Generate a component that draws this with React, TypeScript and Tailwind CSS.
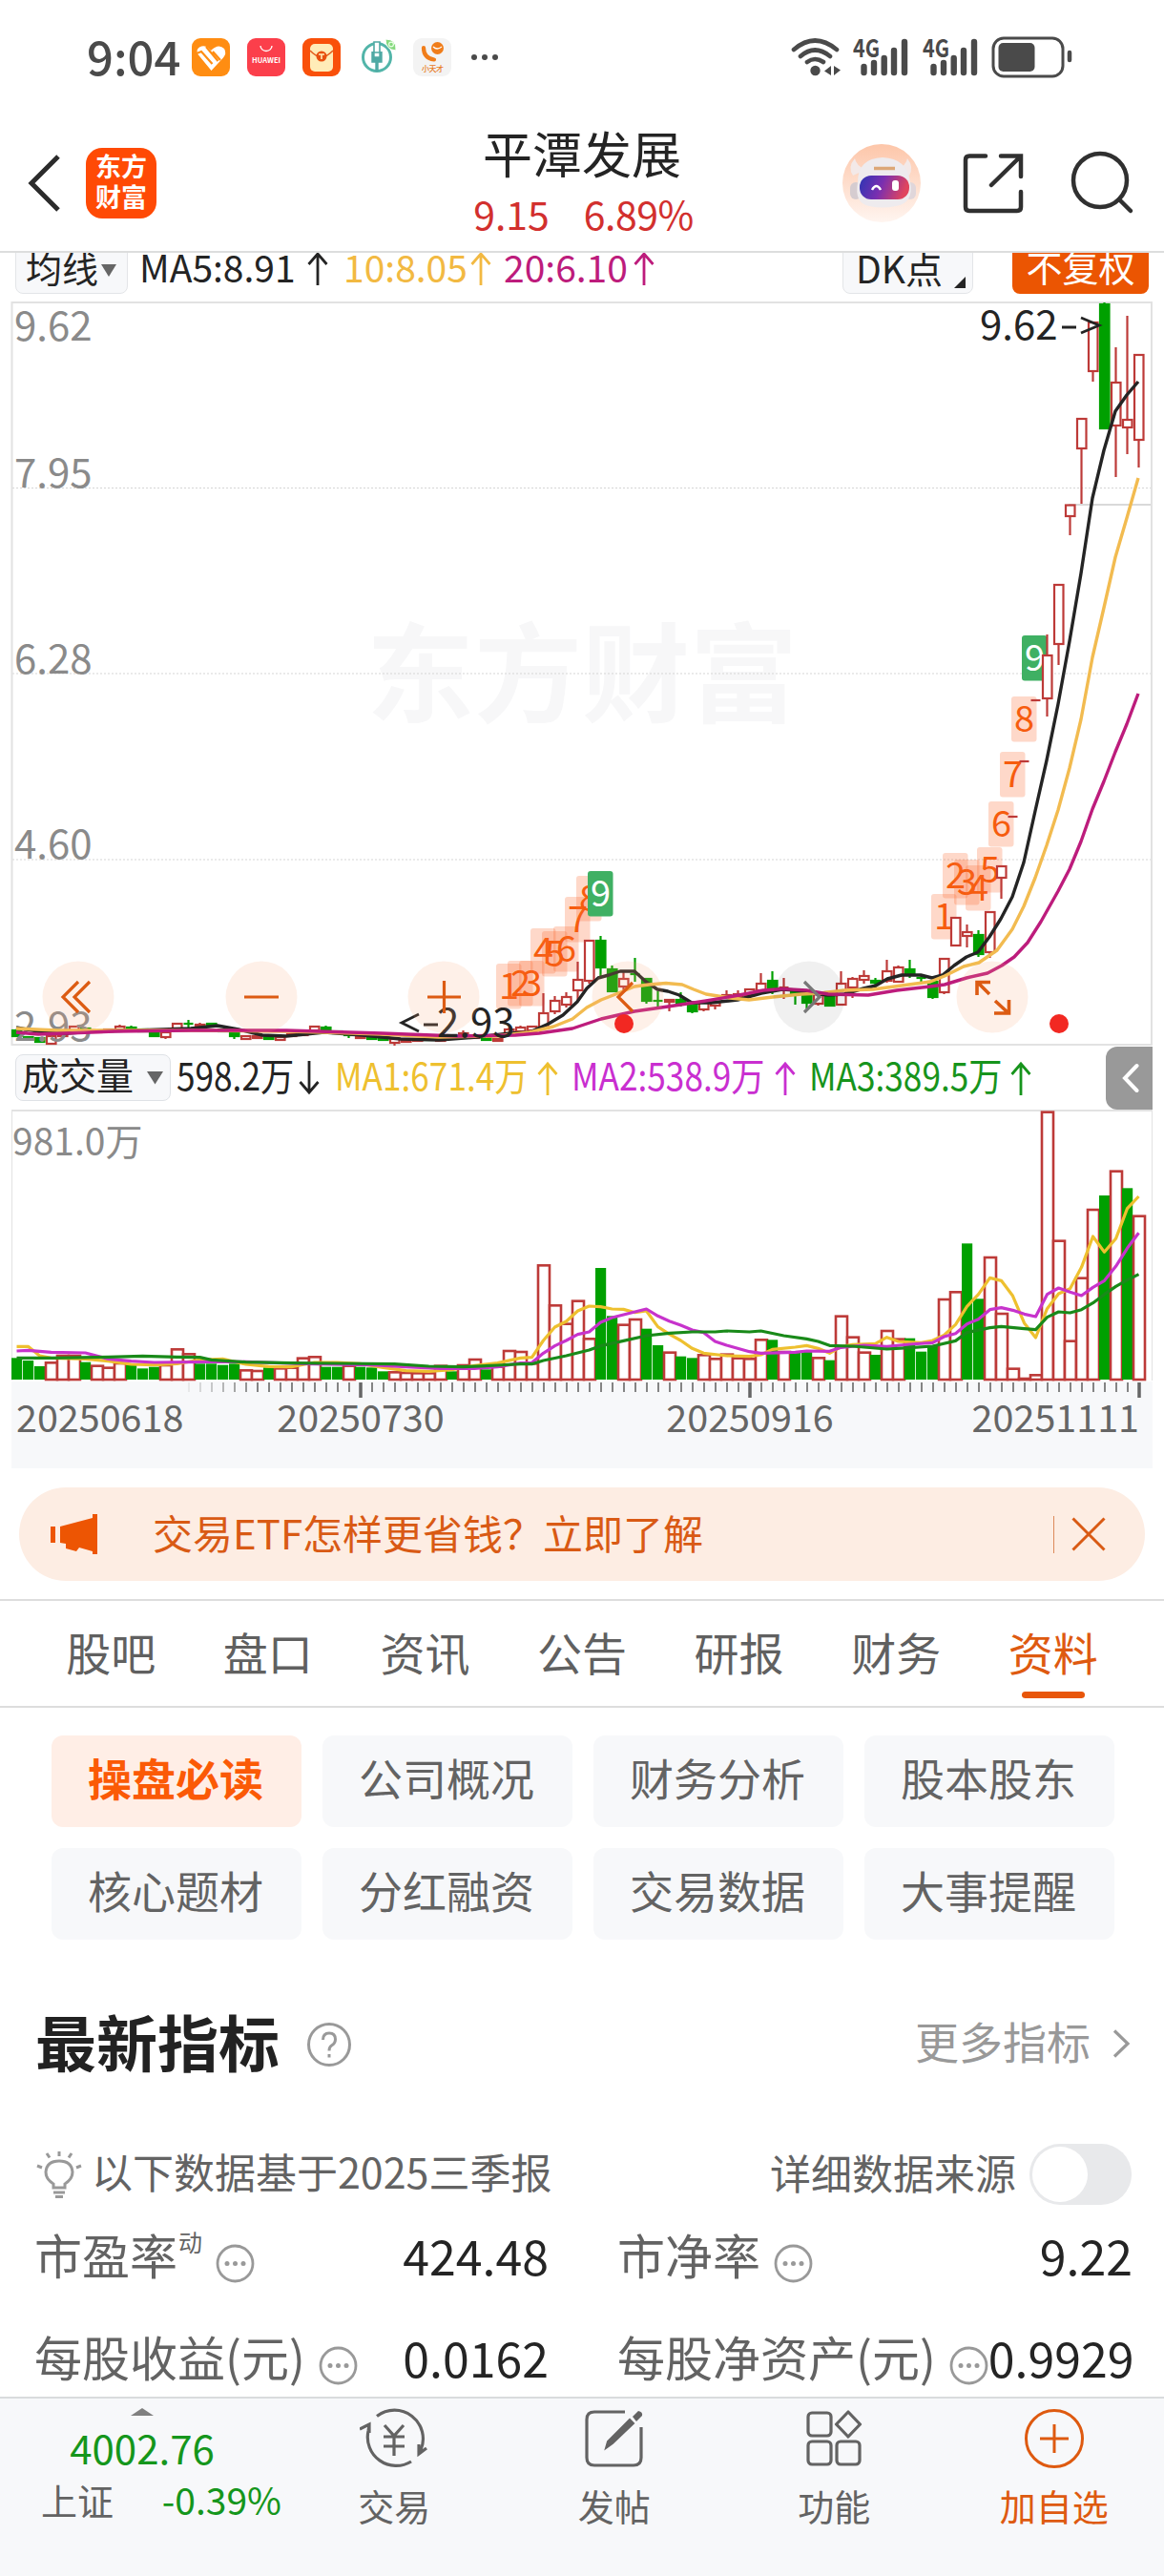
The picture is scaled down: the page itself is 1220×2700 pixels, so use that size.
import React, { useState } from 'react';
import clsx from 'clsx';

type Candle = [index: number, up: 0 | 1, top: number, bottom: number, high?: number, low?: number];
type Point = [number, number];

const BAR_STEP = 12;
const FIRST_BAR = 17.5;
const RED = '#bd3a38';
const GREEN = '#00a000';

const barX = (i: number) => FIRST_BAR + i * BAR_STEP;

// [bar, rising, body top, body bottom, wick top, wick bottom]
const candles: Candle[] = [
  [0, 0, 1080, 1086], [1, 0, 1087, 1089], [2, 0, 1088, 1092], [3, 1, 1086, 1094], [4, 1, 1084, 1086],
  [5, 1, 1076, 1080], [6, 0, 1078, 1080], [7, 1, 1080, 1082], [8, 1, 1079, 1081], [9, 1, 1076, 1079, 1074],
  [10, 0, 1077, 1079, 1075], [11, 0, 1079, 1081], [12, 0, 1082, 1086], [13, 1, 1082, 1087, 1080, 1089], [14, 1, 1073, 1078],
  [15, 0, 1073, 1073, 1069, 1077], [16, 1, 1074, 1076, 1072], [17, 0, 1073, 1075], [18, 0, 1079, 1081], [19, 0, 1083, 1086, 1081, 1089],
  [20, 1, 1086, 1089], [21, 1, 1086, 1088], [22, 0, 1087, 1089, 1084, 1090], [23, 1, 1087, 1090], [24, 1, 1084, 1086],
  [25, 1, 1083, 1085], [26, 1, 1076, 1080], [27, 0, 1077, 1080, 1075], [28, 0, 1081, 1083], [29, 0, 1083, 1085, 1081, 1088],
  [30, 1, 1086, 1088], [31, 0, 1086, 1089, 1084, 1090], [32, 0, 1088, 1090], [33, 1, 1089, 1093, 1087, 1096], [34, 1, 1090, 1092],
  [35, 1, 1089, 1091], [36, 0, 1088, 1090], [37, 1, 1089, 1091], [38, 0, 1086, 1088], [39, 1, 1083, 1085, 1080, 1088],
  [40, 1, 1086, 1088], [41, 0, 1088, 1090, 1086, 1091], [42, 1, 1089, 1091], [43, 1, 1079, 1083, 1077], [44, 1, 1077, 1081, 1075],
  [45, 1, 1076, 1080], [46, 1, 1062, 1078, 1041], [47, 1, 1049, 1060, 1044, 1063], [48, 1, 1045, 1053, 1040, 1056], [49, 1, 1027, 1038, 1008, 1050],
  [50, 1, 986, 1028, 986, 1031], [51, 0, 986, 1014, 981, 1023], [52, 0, 1016, 1039, 1012, 1040], [53, 1, 1026, 1034, 1019, 1038], [54, 0, 1021, 1021, 1004, 1029],
  [55, 0, 1026, 1049, 1025, 1052], [56, 0, 1049, 1049, 1039, 1055], [57, 1, 1048, 1050, 1048, 1060], [58, 0, 1048, 1051, 1040, 1055], [59, 0, 1053, 1060, 1052, 1062],
  [60, 1, 1051, 1058, 1051, 1060], [61, 1, 1051, 1054, 1050, 1058], [62, 1, 1043, 1046, 1038], [63, 1, 1042, 1045, 1038], [64, 1, 1037, 1043],
  [65, 1, 1031, 1038, 1020], [66, 0, 1028, 1037, 1018, 1042], [67, 1, 1035, 1035, 1025, 1047], [68, 0, 1039, 1042, 1039, 1053], [69, 0, 1042, 1051, 1040, 1057],
  [70, 1, 1042, 1052, 1040, 1054], [71, 0, 1040, 1054], [72, 1, 1031, 1053, 1018], [73, 1, 1026, 1035, 1024, 1046], [74, 1, 1023, 1027, 1017, 1031],
  [75, 0, 1028, 1030, 1025, 1037], [76, 1, 1018, 1028, 1006, 1030], [77, 1, 1014, 1029, 1012], [78, 0, 1016, 1021, 1006, 1025], [79, 0, 1025, 1025, 1022, 1030],
  [80, 0, 1029, 1045, 1027, 1047], [81, 1, 1005, 1040, 1005, 1042], [82, 1, 962, 991], [83, 1, 977, 981, 969, 993], [84, 0, 980, 1000, 975, 1003],
  [85, 1, 956, 998, 956, 1004], [86, 1, 908, 920, 908, 942], [87, 1, 856, 856], [88, 1, 798, 798], [89, 1, 734, 734],
  [90, 1, 687, 732, 665, 751], [91, 1, 613, 675, 613, 697], [92, 1, 529.5, 541, 529.5, 561], [93, 1, 439, 470, 439, 528], [94, 1, 338, 389, 338, 400],
  [95, 0, 319, 449, 317, 449], [96, 1, 401, 446, 364, 500], [97, 1, 440, 448, 331, 476], [98, 1, 372, 461, 372, 490],
];

// Bar heights measured up from the volume baseline, negative when the day closed lower
const volumes = [
  -68, -60, -42, 56, 78, 78, -55, 46, 40, 54, -45, -35, -40, 48, 98, 83, -50, -50, -46, -50,
  32, 30, -38, 38, 40, 70, 74, -40, -40, 46, -40, -38, -26, 26, 24, 23, 23, 46, -26, 48,
  66, -32, 43, 93, 90, 53, 362, 236, 178, 250, 131, -351, -200, 175, 192, -160, -108, 88, -73, -68,
  80, 68, 82, 70, 68, 128, -125, 90, -88, -93, 71, -61, 202, 136, 88, -78, 156, 130, -130, -88,
  -105, 255, 278, -428, -254, 387, 210, 37, 6, 17, 844, 439, 124, 322, 537, -579, 658, -602, 517,
].map((v) => v / 3);

const priceMa: { color: string; points: Point[] }[] = [
  {
    color: '#242424',
    points: [
      [17, 1077], [40, 1081], [70, 1083], [100, 1081], [140, 1080], [200, 1078], [228, 1075], [250, 1079], [275, 1085], [300, 1086],
      [340, 1082], [380, 1085], [420, 1089], [460, 1090], [500, 1087], [535, 1083], [555, 1082], [575, 1073], [590, 1064], [605, 1050],
      [615, 1036], [627, 1025], [638, 1022], [650, 1018], [665, 1018], [677, 1029], [689, 1037], [700, 1039], [712, 1043], [725, 1051],
      [745, 1051], [773, 1048], [798, 1041], [820, 1037], [835, 1038], [850, 1041], [868, 1043], [885, 1042], [905, 1036], [918, 1033],
      [930, 1026], [945, 1022], [965, 1022], [977, 1025], [988, 1022], [1000, 1012], [1013, 1003], [1025, 998], [1037, 982], [1049, 963], [1061, 940],
      [1073, 904], [1085, 850], [1097, 797], [1109, 738], [1121, 672], [1133, 601], [1145, 522], [1157, 472], [1169, 431], [1181, 414], [1193, 400],
    ],
  },
  {
    color: '#f2bb50',
    points: [
      [17, 1078], [60, 1080], [100, 1080], [200, 1080], [300, 1081], [340, 1082], [400, 1084], [460, 1087], [520, 1086], [555, 1082],
      [580, 1076], [600, 1068], [615, 1056], [630, 1048], [648, 1041], [665, 1034], [680, 1032], [698, 1030.5], [715, 1032], [727, 1037],
      [740, 1042], [765, 1046], [785, 1048], [810, 1045], [840, 1042], [860, 1041], [885, 1038], [915, 1037], [945, 1033], [975, 1029],
      [990, 1023], [1010, 1013], [1026, 1009], [1045, 996], [1061, 974], [1073, 950], [1085, 920], [1097, 886], [1109, 849], [1121, 805],
      [1133, 754], [1145, 689], [1157, 637], [1169, 584], [1181, 543], [1193, 501],
    ],
  },
  {
    color: '#bd1c7c',
    points: [
      [17, 1082], [40, 1084], [70, 1083], [120, 1081], [200, 1080], [300, 1080], [400, 1083], [480, 1086], [540, 1085], [565, 1083],
      [600, 1078], [630, 1068], [665, 1060], [700, 1055], [740, 1049], [775, 1043], [800, 1038], [820, 1036.5], [845, 1038], [868, 1042],
      [910, 1043], [940, 1038], [975, 1034], [990, 1032], [1013, 1025], [1035, 1020], [1050, 1012], [1063, 1003], [1077, 988], [1091, 966],
      [1109, 934], [1121, 911], [1133, 882], [1145, 848], [1157, 819], [1169, 788], [1181, 759], [1193, 727],
    ],
  },
];

const volumeMa: { color: string; points: Point[] }[] = [
  {
    color: '#eec02f',
    points: [
      [0, 964], [1, 964], [2, 993], [3, 1000], [6, 1003], [8, 1010], [10, 1020], [12, 1022], [14, 1018], [16, 1006], [18, 1003],
      [20, 1020], [22, 1027], [24, 1028], [26, 1014], [28, 1014], [30, 1018], [32, 1030], [34, 1040], [36, 1042], [38, 1037],
      [40, 1024], [42, 1016], [44, 1000], [45, 998], [46, 945], [47, 903], [48, 885], [49, 852], [50, 837], [51, 839], [52, 846],
      [53, 847], [54, 857], [55, 852], [56, 902], [57, 925], [58, 945], [59, 970], [60, 985], [62, 993], [64, 995], [65, 990],
      [66, 973], [68, 966], [69, 961], [70, 970], [71, 985], [72, 965], [73, 958], [75, 955], [76, 935], [77, 948], [79, 952],
      [80, 945], [81, 928], [82, 895], [83, 838], [84, 800], [85, 748], [86, 757], [87, 805], [88, 890], [89, 936], [90, 845],
      [91, 798], [92, 782], [93, 715], [94, 618], [95, 667], [96, 625], [97, 530], [98, 492],
    ],
  },
  {
    color: '#c733cc',
    points: [
      [0, 978], [1, 976], [3, 982], [6, 984], [8, 1003], [10, 1010], [12, 1014], [17, 1012], [20, 1012], [25, 1018], [31, 1022],
      [34, 1028], [37, 1033], [40, 1033], [42, 1028], [44, 1016], [45, 1015], [46, 985], [47, 962], [48, 945], [49, 926], [50, 918],
      [51, 888], [52, 873], [54, 855], [55, 846], [56, 868], [57, 884], [58, 897], [59, 912], [60, 920], [61, 948], [62, 960],
      [64, 980], [65, 985], [68, 982], [69, 978], [71, 979], [72, 967], [74, 960], [76, 964], [78, 957], [80, 952], [81, 933],
      [82, 923], [83, 893], [84, 878], [85, 848], [86, 842], [87, 850], [88, 862], [89, 870], [90, 800], [91, 780], [92, 793],
      [93, 804], [94, 778], [95, 757], [96, 712], [97, 655], [98, 607],
    ],
  },
  {
    color: '#198a19',
    points: [
      [0, 1000], [3, 1000], [8, 997], [11, 994], [14, 997], [16, 998], [17, 1006], [20, 1013], [24, 1016], [28, 1017], [33, 1019],
      [36, 1026], [39, 1028], [42, 1023], [44, 1019], [45, 1019], [46, 1008], [48, 993], [50, 975], [51, 962], [53, 946], [55, 930],
      [57, 922], [59, 918], [61, 918], [62, 915], [64, 918], [65, 915], [67, 930], [69, 940], [70, 948], [71, 961], [73, 963],
      [76, 972], [78, 968], [80, 963], [82, 946], [83, 920], [85, 905], [86, 901], [88, 908], [89, 911], [90, 872], [91, 855],
      [92, 858], [93, 848], [94, 827], [95, 800], [96, 775], [97, 755], [98, 737],
    ],
  },
];

// Nine-turn sequence labels, [text, left, top]
const marks: [string, number, number][] = [
  ['1', 520, 1010], ['2', 532, 1007], ['3', 544, 1007], ['4', 556, 973], ['5', 568, 976], ['6', 580, 971], ['7', 592, 940], ['8', 604, 918], ['9', 616, 913],
  ['1', 976, 937], ['2', 988, 894], ['3', 1000, 901], ['4', 1012, 907], ['5', 1024, 888], ['6', 1036, 840], ['7', 1048, 788], ['8', 1060, 730], ['9', 1071, 666],
];

const toPoints = (points: Point[]) => points.map((p) => p.join(',')).join(' ');

const Arrow: React.FC<{ down?: boolean; className?: string }> = ({ down, className }) => (
  <svg width="22" height="36" viewBox="0 0 22 36" fill="none" stroke="currentColor" strokeWidth="2.800" className={clsx(down && 'rotate-180', className)}>
    <path d="M11 36V3M1.500 14L11 3L20.500 14" />
  </svg>
);

const Signal = () => (
  <svg width="58" height="42" viewBox="0 0 58 42" className="text-[#4a4a4a]">
    <text x="0" y="21" fontSize="26" fontWeight="700" fill="currentColor" textLength="28" lengthAdjust="spacingAndGlyphs">4G</text>
    <path d="M11.5 31v6M22 27v10M32.700 22v15M43 14v23M54 5v32" stroke="currentColor" strokeWidth="6.400" strokeLinecap="round" />
  </svg>
);

const StatusBar = () => (
  <div className="flex h-[120px] items-center pl-[91px] text-[#4a4a4a]">
    <span className="-mt-[6px] w-[110px] text-[49px] leading-none font-medium">9:04</span>
    <div className="flex items-center gap-[18px]">
      <svg width="40" height="40" viewBox="0 0 40 40">
        <rect width="40" height="40" rx="9" fill="#ff8d12" />
        <path d="M20.500 34L6.500 17Q4 12 8 9.500Q13 7 17 10L20 13Q28 5 34 11Q37 16 33 20.500Z" fill="#fff" />
        <path d="M5 16L10 14L21.500 27M15 9L27.500 24M22 14L30 23" stroke="#ff8d12" strokeWidth="2.200" fill="none" />
      </svg>
      <svg width="40" height="40" viewBox="0 0 40 40">
        <rect width="40" height="40" rx="9" fill="#fb3f4b" />
        <path d="M14 8a6 5.500 0 0 0 12 0" stroke="#fff" strokeWidth="1.300" fill="none" />
        <text x="5" y="26" fontSize="7.500" fontWeight="600" fill="#fff" textLength="30">HUAWEI</text>
      </svg>
      <svg width="40" height="40" viewBox="0 0 40 40">
        <rect width="40" height="40" rx="9" fill="#f9500a" />
        <rect x="8" y="6" width="24" height="29" rx="5" fill="#ffecb8" />
        <path d="M8 13Q20 26 32 13" stroke="#e35b1c" strokeWidth="1.500" fill="none" />
        <circle cx="20" cy="19" r="5.500" fill="#e8500f" />
        <path d="M17 17h6M20 17v5" stroke="#ffecb8" strokeWidth="1.600" />
      </svg>
      <svg width="40" height="40" viewBox="0 0 40 40" fill="none" stroke="#4fa9a4">
        <circle cx="20" cy="20" r="14.500" stroke="#52b5a9" strokeWidth="3" />
        <path d="M16 14V24H24V14M20 21V35M15 21H25" strokeWidth="3.400" />
        <path d="M17 4H23V15H17Z" fill="#fff" strokeWidth="1.600" />
        <path d="M29 1Q41 1 40 13Q29 12 29 1Z" fill="#86d97f" stroke="#fff" strokeWidth="1" />
        <circle cx="35" cy="6.500" r="2.400" stroke="#e8ffe4" strokeWidth="1.200" />
      </svg>
      <svg width="40" height="40" viewBox="0 0 40 40">
        <rect width="40" height="40" rx="9" fill="#f3f3f3" />
        <circle cx="25.500" cy="10.500" r="6.500" fill="#f07d1a" />
        <path d="M11 10Q11 21 22 22.500" stroke="#f07d1a" strokeWidth="4.200" fill="none" strokeLinecap="round" />
        <path d="M21 9q4 4 9 0" stroke="#fff" strokeWidth="1.200" fill="none" />
        <text x="9" y="35" fontSize="8" fontWeight="500" fill="#e8791c" textLength="23">小天才</text>
      </svg>
      <svg width="32" height="8" viewBox="0 0 32 8" fill="#4a4a4a" className="ml-[2px]">
        <circle cx="4" cy="4" r="3" />
        <circle cx="15" cy="4" r="3" />
        <circle cx="26" cy="4" r="3" />
      </svg>
    </div>
    <div className="ml-auto flex items-center pr-[95px]">
      <svg width="52" height="42" viewBox="0 0 52 42" fill="none" stroke="#4a4a4a" strokeWidth="4.600" strokeLinecap="round">
        <path d="M3 13Q25 -6 48 13M10 20Q25 7 41 20M17 26Q25 20 34 26" />
        <circle cx="25.500" cy="35" r="5.200" fill="#4a4a4a" stroke="none" />
        <path d="M42 30v10L35 35.500ZM45 30v10L52 34.500Z" fill="#4a4a4a" stroke="none" />
      </svg>
      <div className="ml-[13px] flex gap-[15px]">
        <Signal />
        <Signal />
      </div>
      <svg width="86" height="44" viewBox="0 0 86 44" className="ml-[14px]">
        <rect x="2" y="2" width="73" height="40" rx="11" fill="none" stroke="#4a4a4a" strokeWidth="3" />
        <rect x="7.500" y="7" width="38" height="30" rx="5" fill="#4a4a4a" />
        <path d="M82 17v8" stroke="#4a4a4a" strokeWidth="4.500" strokeLinecap="round" />
      </svg>
    </div>
  </div>
);

const Robot = () => (
  <svg width="82" height="82" viewBox="0 0 82 82">
    <defs>
      <linearGradient id="halo" x1="0" y1="0" x2="0" y2="1">
        <stop offset="0" stopColor="#fdc6a9" />
        <stop offset="1" stopColor="#fff5f0" />
      </linearGradient>
      <linearGradient id="visor" x1="0" y1="0" x2="1" y2="0.2">
        <stop offset="0" stopColor="#2c35b4" />
        <stop offset="0.5" stopColor="#7a2fb0" />
        <stop offset="1" stopColor="#e0455e" />
      </linearGradient>
    </defs>
    <circle cx="41" cy="41" r="41" fill="url(#halo)" />
    <path d="M13 15Q5 24 11 33L24 27Q14 22 13 15ZM68 15Q75 24 70 33L57 27Q67 22 68 15Z" fill="#f3e9e8" />
    <rect x="8" y="40" width="12" height="18" rx="6" fill="#d5ccd0" />
    <rect x="65" y="40" width="12" height="18" rx="6" fill="#e0d6da" />
    <path d="M16 40Q16 15 42 14Q68 15 71 40Q75 62 56 65Q42 68 28 65Q12 62 16 40Z" fill="#eeebee" />
    <rect x="18" y="33" width="52" height="25" rx="12" fill="url(#visor)" />
    <path d="M33 25.500h22" stroke="#dca777" strokeWidth="3.500" />
    <path d="M31 48q4.500 -8 9 0" stroke="#fff" strokeWidth="2.500" fill="none" />
    <rect x="52" y="38" width="7" height="11" rx="3" fill="#fff" />
  </svg>
);

const Header = () => (
  <div className="grid h-[143px] grid-cols-3">
    <div className="flex items-center pl-[28px]">
      <svg width="36" height="60" viewBox="0 0 36 60" fill="none" stroke="#2b2b2b" strokeWidth="5">
        <path d="M33 2L5 30L33 58" />
      </svg>
      <div className="ml-[26px] flex h-[74px] w-[74px] flex-col items-center justify-center rounded-[17px] bg-[#ff4a05] pb-[3px] text-[27px] leading-[32px] font-bold text-white">
        <span>东方</span>
        <span>财富</span>
      </div>
    </div>
    <div className="flex flex-col items-center pt-[14px] leading-none">
      <div className="text-[52px] text-[#242424]">平潭发展</div>
      <div className="mt-[17px] flex gap-[36px] text-[41px] text-[#d2302e]">
        <span>9.15</span>
        <span className="-mr-[3px] tracking-[-0.5px]">6.89%</span>
      </div>
    </div>
    <div className="flex items-center justify-end pr-[31px]">
      <Robot />
      <svg width="66" height="66" viewBox="0 0 66 66" fill="none" stroke="#303030" strokeWidth="4.500" strokeLinecap="round" className="ml-[43px]">
        <path d="M25 4.500H8Q4 4.500 4 8.500V58Q4 62 8 62H58Q62 62 62 58V42M41 4.500H62V26M61 5.500L31 35" />
      </svg>
      <svg width="68" height="68" viewBox="0 0 68 68" fill="none" stroke="#303030" strokeWidth="4.500" strokeLinecap="round" className="ml-[47px]">
        <circle cx="32" cy="31" r="28" />
        <path d="M52 51L64 63" />
      </svg>
    </div>
  </div>
);

const PriceToolbar = () => (
  <div className="h-[45px] overflow-hidden border-t-2 border-[#dcdddd]">
    <div className="-mt-[6px] flex h-[49px] pl-[16px] text-[39px] leading-[40px] whitespace-nowrap text-[#242424]">
      <div className="flex w-[118px] rounded-b-[8px] border border-[#e3e5e8] bg-[#f7f8fa] pl-[10px]">
        <span className="text-[38px]">均线</span>
        <svg width="16" height="14" viewBox="0 0 16 14" className="mt-[17px] ml-[3px]" fill="#666">
          <path d="M0 0H16L8 13Z" />
        </svg>
      </div>
      <div className="flex w-[226px] pl-[12px]">
        <span className="w-[176px]">MA5:8.91</span>
        <Arrow className="mt-[4px]" />
      </div>
      <div className="flex w-[168px] text-[#f2b942]">
        <span className="w-[133px]">10:8.05</span>
        <Arrow className="mt-[4px]" />
      </div>
      <div className="flex text-[#bd1c7c]">
        <span className="w-[136px]">20:6.10</span>
        <Arrow className="mt-[4px]" />
      </div>
      <div className="mr-[41px] ml-auto flex w-[137px] rounded-b-[8px] border border-[#e3e5e8] bg-[#f7f8fa] pl-[13px]">
        <span>DK点</span>
        <svg width="12" height="12" viewBox="0 0 12 12" className="mt-[30px] ml-[12px]" fill="#242424">
          <path d="M12 0V12H0Z" />
        </svg>
      </div>
      <div className="mr-[16px] w-[143px] rounded-b-[8px] bg-[#eb5502] text-center text-[38px] text-white">不复权</div>
    </div>
  </div>
);

const PriceChart = () => (
  <svg width="1220" height="790" viewBox="0 308 1220 790" className="block">
    <text x="384" y="748" fontSize="113" fontWeight="700" fill="#f7f7f8">东方财富</text>
    {[511.5, 706, 901].map((y) => (
      <path key={y} d={`M13 ${y}H1207`} stroke="#d5d5d5" strokeWidth="1" strokeDasharray="2 2" />
    ))}
    <path d="M1120 529H1207" stroke="#cccccc" strokeWidth="1.500" />
    <rect x="12.500" y="317" width="1194.500" height="778" fill="none" stroke="#e2e2e2" strokeWidth="2" />

    {marks.map(([label, x, y], i) => (
      <g key={i}>
        <rect x={x} y={y} width="26.500" height="47.500" rx="3" fill={label === '9' ? '#3fb063' : '#fa6a2e'} fillOpacity={label === '9' ? 1 : 0.26} />
        <text x={x + 13.500} y={y + 36.500} fontSize="38" textAnchor="middle" fill={label === '9' ? '#fff' : '#f65c0e'}>{label}</text>
      </g>
    ))}

    {candles.map(([i, up, top, bottom, high = top, low = bottom]) => {
      const x = barX(i);
      const color = up ? RED : GREEN;
      return (
        <g key={i} stroke={color} strokeWidth="2.200">
          {high < top && <path d={`M${x} ${high}V${top}`} />}
          {low > bottom && <path d={`M${x} ${bottom}V${low}`} />}
          {top === bottom ? (
            <path d={`M${x - 5} ${top}H${x + 5}`} />
          ) : (
            <rect x={x - 4.500} y={top} width="9.500" height={bottom - top} fill={up ? '#fff' : GREEN} />
          )}
        </g>
      );
    })}

    <g fontSize="42" fill="#8a8a8a">
      <text x="15" y="357">9.62</text>
      <text x="15" y="511">7.95</text>
      <text x="15" y="706">6.28</text>
      <text x="15" y="900">4.60</text>
      <text x="15" y="1091">2.93</text>
    </g>

    {priceMa.map((line) => (
      <polyline key={line.color} points={toPoints(line.points)} fill="none" stroke={line.color} strokeWidth="3.400" strokeLinejoin="round" />
    ))}

    <text x="458" y="1087" fontSize="42" fill="#242424">2.93</text>
    <path d="M439 1063L421 1072L439 1081M444 1074H459" stroke="#242424" strokeWidth="2.800" fill="none" />
    <text x="1027" y="356" fontSize="42" fill="#242424">9.62</text>
    <path d="M1113 343H1128M1133 333L1152 341L1133 349" stroke="#242424" strokeWidth="2.800" fill="none" />

    {[82, 274, 465, 658, 1040].map((x) => (
      <circle key={x} cx={x} cy="1045" r="37.500" fill="#f8a878" fillOpacity="0.17" />
    ))}
    <circle cx="848" cy="1045" r="37.500" fill="#000" fillOpacity="0.06" />
    <g fill="none" stroke="#dc5b12" strokeWidth="3.200">
      <path d="M82 1029L66 1045L82 1061M94 1029L78 1045L94 1061" />
      <path d="M256 1045H292" />
      <path d="M448 1045H483M465.500 1028V1062" />
      <path d="M663 1030L648 1045L663 1060" />
      <path d="M1037 1042L1025 1030M1024 1043V1029.500H1038M1043 1049L1056 1061M1057.500 1048V1062H1042" strokeWidth="3.600" />
    </g>
    <path d="M843 1029L859 1045L843 1061" fill="none" stroke="#777" strokeWidth="3.200" />
    <circle cx="654" cy="1073" r="10" fill="#f22822" />
    <circle cx="1110" cy="1073" r="10" fill="#f22822" />
  </svg>
);

interface VolumeStatProps {
  label: string;
  down?: boolean;
  className?: string;
}

const VolumeStat: React.FC<VolumeStatProps> = ({ label, down, className }) => (
  <div className={clsx('flex items-center justify-between', className)}>
    <div className="-mt-[7px] w-0 whitespace-nowrap">
      <span className="inline-block origin-left scale-x-[0.88]">{label}</span>
    </div>
    <Arrow down={down} />
  </div>
);

const VolumeToolbar = () => (
  <div className="flex h-[65px] items-center pb-[2px] pl-[16px] text-[40px] leading-none">
    <button className="flex h-[49px] w-[163px] items-center rounded-[8px] border border-[#dfe2e6] bg-[#f7f8fa] pl-[6px] text-[39px] text-[#242424]">
      <span className="-mt-[8px]">成交量</span>
      <svg width="17" height="14" viewBox="0 0 17 14" fill="#666" className="ml-[14px]">
        <path d="M0 0H17L8.500 13.500Z" />
      </svg>
    </button>
    <VolumeStat label="598.2万" down className="ml-[6px] w-[150px] text-[#242424]" />
    <VolumeStat label="MA1:671.4万" className="ml-[16px] w-[234px] text-[#eec02f]" />
    <VolumeStat label="MA2:538.9万" className="ml-[14px] w-[235px] text-[#c92fd0]" />
    <VolumeStat label="MA3:389.5万" className="ml-[14px] w-[233px] text-[#17941c]" />
    <div className="mr-[12px] ml-auto flex h-[66px] w-[49px] items-center justify-center rounded-l-[12px] bg-[#999]">
      <svg width="18" height="32" viewBox="0 0 18 32" fill="none" stroke="#fff" strokeWidth="4" strokeLinecap="round" className="ml-[2px]">
        <path d="M15.500 3L3 16L15.500 29" />
      </svg>
    </div>
  </div>
);

const VolumeChart = () => (
  <svg width="1220" height="377" viewBox="0 1163 1220 377" className="block">
    <path d="M12 1164H1208" stroke="#e2e2e2" strokeWidth="2" />
    <path d="M12.500 1164V1447M1207.500 1164V1447" stroke="#e2e2e2" />
    <rect x="12" y="1448" width="1196" height="91" fill="#f7f8fa" />
    <text x="13" y="1211" fontSize="39" fill="#8a8a8a">981.0万</text>
    {volumes.map((v, i) => {
      const x = barX(i);
      const h = Math.abs(v);
      return v > 0 ? (
        <rect key={i} x={x - 5.500} y={1447 - h} width="12" height={h - 1} fill="#fff" stroke={RED} strokeWidth="2.600" />
      ) : (
        <rect key={i} x={x - 5.500} y={1446 - h} width="11.200" height={h} fill={GREEN} />
      );
    })}
    {volumeMa.map((line) => (
      <polyline
        key={line.color}
        points={toPoints(line.points.map(([i, y]) => [barX(i), 1090 + y / 3]))}
        fill="none"
        stroke={line.color}
        strokeWidth="3.200"
        strokeLinejoin="round"
      />
    ))}
    {Array.from({ length: 84 }, (_, k) => k + 15).map((i) => {
      const major = i === 30 || i === 64 || i === 98;
      return (
        <path
          key={i}
          d={`M${barX(i) + 0.5} 1449V${major ? 1465 : 1459}`}
          stroke={major ? '#666' : '#777'}
          strokeWidth={major ? 3.500 : 1.800}
          strokeOpacity={Math.min(1, (i - 14) / 7)}
        />
      );
    })}
    <g fontSize="39.500" fill="#666">
      <text x="17" y="1501">20250618</text>
      <text x="378" y="1501" textAnchor="middle">20250730</text>
      <text x="786" y="1501" textAnchor="middle">20250916</text>
      <text x="1194" y="1501" textAnchor="end">20251111</text>
    </g>
  </svg>
);

const Banner = () => (
  <div className="mx-[20px] mt-[19px] flex h-[98px] items-center rounded-[49px] bg-[#fdede3] pl-[33px] text-[#d95a14]">
    <svg width="50" height="44" viewBox="0 0 50 44" fill="#ed5503">
      <path d="M0 14h5v17H0ZM10 14L44 5V1H49V43H44V40L30 36L27 40L16 37V32L10 31Z" />
    </svg>
    <span className="-mt-[4px] ml-[57px] text-[42px] leading-none">交易ETF怎样更省钱？立即了解</span>
    <div className="ml-auto h-[39px] w-px bg-[#dd8a5a]" />
    <svg width="36" height="36" viewBox="0 0 36 36" stroke="#d95a14" strokeWidth="3" className="mr-[41px] ml-[18px]">
      <path d="M1.500 1.500L34.500 34.500M34.500 1.500L1.500 34.500" />
    </svg>
  </div>
);

const tabs = ['股吧', '盘口', '资讯', '公告', '研报', '财务', '资料'];

const Tabs = () => {
  const [active, setActive] = useState('资料');
  return (
    <div className="mt-[19px] flex h-[114px] border-y-2 border-[#dddddd] px-[34px]">
      {tabs.map((tab) => (
        <button
          key={tab}
          onClick={() => setActive(tab)}
          className={clsx('flex flex-1 flex-col items-center pt-[29px] text-[47px] leading-none', tab === active ? 'text-[#de5a10]' : 'text-[#606060]')}
        >
          {tab}
          {tab === active && <span className="mt-[19px] h-[7px] w-[66px] rounded-full bg-[#e8560a]" />}
        </button>
      ))}
    </div>
  );
};

const sections = ['操盘必读', '公司概况', '财务分析', '股本股东', '核心题材', '分红融资', '交易数据', '大事提醒'];

const SectionGrid = () => {
  const [active, setActive] = useState('操盘必读');
  return (
    <div className="mt-[29px] mr-[52px] ml-[54px] grid grid-cols-4 gap-x-[22px] gap-y-[22px]">
      {sections.map((section) => (
        <button
          key={section}
          onClick={() => setActive(section)}
          className={clsx(
            'h-[96px] rounded-[12px] pr-[2px] pb-[10px] text-[46px] leading-none',
            section === active ? 'bg-[#ffeee6] font-bold text-[#fb5a06]' : 'bg-[#f7f8fa] text-[#636363]',
          )}
        >
          {section}
        </button>
      ))}
    </div>
  );
};

const MoreDots: React.FC<{ className?: string }> = ({ className }) => (
  <svg width="41" height="41" viewBox="0 0 41 41" className={clsx('shrink-0', className)} fill="#999">
    <circle cx="20.500" cy="20.500" r="18.500" fill="none" stroke="#999" strokeWidth="2.800" />
    <circle cx="12" cy="20.500" r="2.500" />
    <circle cx="20.500" cy="20.500" r="2.500" />
    <circle cx="29" cy="20.500" r="2.500" />
  </svg>
);

interface MetricProps {
  label: string;
  sup?: string;
  value: string;
}

const Metric: React.FC<MetricProps> = ({ label, sup, value }) => (
  <div className="flex h-[50px] items-center leading-none whitespace-nowrap">
    <span className="-ml-px text-[50px] text-[#636363]">{label}</span>
    {sup && <span className="mb-[26px] ml-px text-[25px] text-[#636363]">{sup}</span>}
    <MoreDots className="mt-[20px] ml-[14px]" />
    <span className="mt-px ml-auto text-[50px] text-[#242424]">{value}</span>
  </div>
);

const Indicators = () => (
  <div className="h-[479px] overflow-hidden pr-[34px] pl-[37px]">
    <div className="flex items-center pt-[73px] leading-none">
      <h2 className="text-[64px] font-bold text-[#222]">最新指标</h2>
      <svg width="48" height="48" viewBox="0 0 48 48" fill="none" stroke="#999" strokeWidth="3" className="mt-[10px] ml-[28px]">
        <circle cx="24" cy="24" r="21.500" />
        <path d="M17.500 19q0 -7 6.500 -7t6.500 6.500q0 4 -4 6.500q-2.500 1.500 -2.500 5.500M24 34v3.500" />
      </svg>
      <span className="ml-auto text-[46px] text-[#999]">更多指标</span>
      <svg width="20" height="30" viewBox="0 0 20 30" fill="none" stroke="#999" strokeWidth="3.200" className="mt-[8px] mr-px ml-[22px]">
        <path d="M3 1.500L17 15L3 28.500" />
      </svg>
    </div>

    <div className="mt-[77px] flex h-[64px] items-center text-[43px] leading-none text-[#636363]">
      <svg width="50" height="52" viewBox="0 0 50 52" fill="none" stroke="#999" strokeWidth="3">
        <path d="M19 40V36Q11 31 11 23.500Q12 12 25 12T39 23.500Q39 31 31 36V40Z" />
        <path d="M19 45h12M21 49.500h8M25 2v5M12 4l3 4.500M38 4l-3 4.500M2 17l5 2M48 17l-5 2" />
      </svg>
      <span className="-mt-[8px] ml-[9px]">以下数据基于2025三季报</span>
      <span className="-mt-[5px] ml-auto">详细数据来源</span>
      <div className="ml-[14px] flex h-[64px] w-[107px] items-center rounded-full bg-[#e8e9eb] pl-[3px]">
        <div className="h-[58px] w-[58px] rounded-full bg-white" />
      </div>
    </div>

    <div className="mt-[26px] grid grid-cols-[538px_539px] gap-x-[73px] gap-y-[57px]">
      <Metric label="市盈率" sup="动" value="424.48" />
      <Metric label="市净率" value="9.22" />
      <Metric label="每股收益(元)" value="0.0162" />
      <Metric label="每股净资产(元)" value="0.9929" />
    </div>
  </div>
);

const TradeIcon = () => (
  <svg width="72" height="64" viewBox="0 0 72 64" fill="none" stroke="#636363" strokeWidth="3.200">
    <path d="M18 8.500A30 30 0 0 1 64 44L62 48M70 42L62 48L62 38M54 56A30 30 0 0 1 9 24L10 18M0 22L10 17L10 26" />
    <path d="M26 18L36 29L46 18M25 30H47M25 40H47M36 29V50" />
  </svg>
);

const PostIcon = () => (
  <svg width="64" height="64" viewBox="0 0 64 64" fill="none" stroke="#636363" strokeWidth="3.200">
    <path d="M43 4H11Q3 4 3 12V52Q3 60 11 60H52Q60 60 60 52V20" />
    <path d="M23 42L25 35L48 12L52 16L30 37Z" fill="#636363" strokeWidth="2" />
    <path d="M51 9L57 3Q62 4 61 8L55 14Z" fill="#636363" stroke="none" />
  </svg>
);

const FeatureIcon = () => (
  <svg width="60" height="62" viewBox="0 0 60 62" fill="none" stroke="#636363" strokeWidth="3.200">
    <rect x="3" y="4" width="24" height="24" rx="4" />
    <rect x="3" y="34" width="24" height="24" rx="4" />
    <rect x="33" y="34" width="24" height="24" rx="4" />
    <path d="M45 3L57.500 16L45 29L32.500 16Z" strokeLinejoin="round" />
  </svg>
);

const AddIcon = () => (
  <svg width="64" height="64" viewBox="0 0 64 64" fill="none" stroke="#de5a10" strokeWidth="3">
    <circle cx="32" cy="32" r="29.500" />
    <path d="M17 32H47M32 17V47" />
  </svg>
);

const actions = [
  { label: '交易', icon: <TradeIcon /> },
  { label: '发帖', icon: <PostIcon /> },
  { label: '功能', icon: <FeatureIcon /> },
  { label: '加自选', icon: <AddIcon /> },
];

const BottomBar = () => (
  <div className="flex h-[188px] border-t-2 border-[#d9dbdd] bg-[#f7f8fa] leading-none">
    <div className="flex w-[298px] flex-col items-center pt-[10px]">
      <svg width="24" height="8" viewBox="0 0 24 8" fill="#808080">
        <path d="M12 0L24 8H0Z" />
      </svg>
      <div className="mt-[12px] text-[42px] text-[#15961c]">4002.76</div>
      <div className="mt-[14px] flex w-full items-center justify-between pr-[3px] pl-[43px]">
        <span className="text-[38px] text-[#636363]">上证</span>
        <span className="text-[39px] text-[#15961c]">-0.39%</span>
      </div>
    </div>
    <div className="grid flex-1 grid-cols-4">
      {actions.map(({ label, icon }) => (
        <button key={label} className={clsx('flex flex-col items-center justify-start pt-[10px] text-[38px]', label === '加自选' ? 'text-[#de5a10]' : 'text-[#636363]')}>
          <span className="flex h-[64px] items-center">{icon}</span>
          <span className="mt-[19px]">{label}</span>
        </button>
      ))}
    </div>
  </div>
);

const App = () => (
  <div className="flex h-[2700px] w-[1220px] flex-col overflow-hidden bg-white font-['Noto_Sans_CJK_SC',sans-serif]">
    <StatusBar />
    <Header />
    <PriceToolbar />
    <PriceChart />
    <VolumeToolbar />
    <VolumeChart />
    <Banner />
    <Tabs />
    <SectionGrid />
    <Indicators />
    <BottomBar />
  </div>
);

export default App;
